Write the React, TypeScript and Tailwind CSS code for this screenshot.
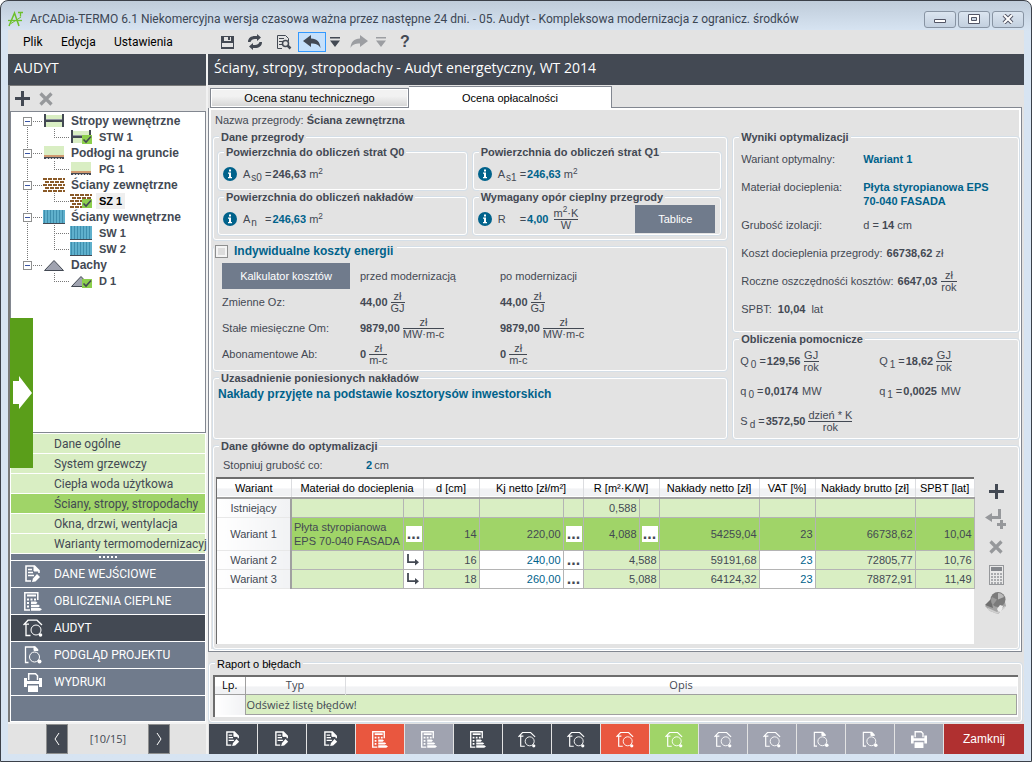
import { useState } from "react";
import type { ReactNode } from "react";
import clsx from "clsx";

/* ---------- icons ---------- */

interface IconProps {
  className?: string;
}

const LogoIcon = () => (
  <svg viewBox="0 0 16 16" className="h-4 w-4" fill="none" stroke="#6cc02b">
    <path d="M1 15 6.500 2 11 15" strokeWidth="1.500" />
    <path d="M0 9.500h14" strokeWidth="1.300" />
    <path d="M3 12.500 13 6" strokeWidth="1" />
    <path d="M10 1.500h5M12.500 1.500v4" strokeWidth="1.300" />
  </svg>
);

const SaveIcon = () => (
  <svg viewBox="0 0 13 13" className="h-[13px] w-[13px]" shapeRendering="crispEdges">
    <path d="M0 0h13v13H0z" fill="#434953" />
    <path d="M3 1h7v4H3zM1 7h11v4H1z" fill="#e3e3e3" />
    <path d="M7 1h2v3H7z" fill="#434953" />
  </svg>
);

const RefreshIcon = () => (
  <svg viewBox="0 0 16 16" className="h-4 w-4" fill="#434953">
    <path d="M1 8C1 4 4 2 8 2h2V0l4 3.500L10 7V5H8C6 5 4 6 3.500 8z" />
    <path d="M15 8c0 4-3 6-7 6H6v2l-4-3.500L6 9v2h2c2 0 4-1 4.500-3z" />
  </svg>
);

const FindPageIcon = () => (
  <svg viewBox="0 0 16 16" className="h-4 w-4" fill="none" stroke="#434953">
    <path d="M6 14.500H1.500v-13h8l3 3V7M3 4.500h5M3 7.500h4M3 10.500h3" />
    <circle cx="9.500" cy="9.500" r="3" strokeWidth="1.500" />
    <path d="m11.500 11.500 3 3" strokeWidth="2.500" />
  </svg>
);

const UndoIcon = () => (
  <svg viewBox="0 0 18 14" className="h-[14px] w-[18px]" fill="#434953">
    <path d="M0 6 8 0v3.500c6 0 9 3.500 9.500 9.500-2-3.500-4.500-4.500-9.500-4.500V12z" />
  </svg>
);

const RedoIcon = () => (
  <svg viewBox="0 0 18 14" className="h-[14px] w-[18px]" fill="#9c9ea2">
    <path d="M18 6 10 0v3.500C4 3.500 1 7 .5 13 2.500 9.500 5 8.500 10 8.500V12z" />
  </svg>
);

const DropIcon = ({ className }: IconProps) => (
  <svg viewBox="0 0 10 10" className={clsx("h-[10px] w-[10px]", className)} fill="currentColor">
    <path d="M0 0h10v1.500H0zM0 3.500h10L5 10z" />
  </svg>
);

const PlusIcon = ({ className }: IconProps) => (
  <svg viewBox="0 0 15 15" className={clsx("h-[15px] w-[15px]", className)} fill="#434953">
    <path d="M6 0h3v6h6v3H9v6H6V9H0V6h6z" />
  </svg>
);

const CrossIcon = () => (
  <svg viewBox="0 0 14 14" className="h-[14px] w-[14px]" stroke="#96989b" strokeWidth="3.200">
    <path d="m1.500 1.500 11 11M12.500 1.500l-11 11" />
  </svg>
);

const InsertIcon = () => (
  <svg viewBox="0 0 22 20" className="h-5 w-[22px]" fill="#96989b">
    <path d="M13 0h3v10H7v3L0 8.500 7 4v3h6z" />
    <path d="M15 11h3v3h3v3h-3v3h-3v-3h-3v-3h3z" />
  </svg>
);

const CalculatorIcon = () => (
  <svg viewBox="0 0 15 20" className="h-5 w-[15px]" shapeRendering="crispEdges">
    <path d="M.5.5h14v19H.5z" fill="#e9e9e9" stroke="#96989b" />
    <path d="M2 2h11v4H2z" fill="#85888d" />
    {[8, 11, 14, 17].map((y) => (
      <path key={y} d={`M2 ${y}h2v2H2zM5 ${y}h2v2H5zM8 ${y}h2v2H8zM11 ${y}h2v2h-2z`} fill="#a9abae" />
    ))}
  </svg>
);

const BookIcon = () => (
  <svg viewBox="0 0 22 22" className="h-[22px] w-[22px]">
    <path d="m0 14 6-5 14 1 1 4-8 8-8-3z" fill="#a3a3a3" />
    <path d="m3 16 9 4 8-6v2l-8 6-9-4z" fill="#cfcfcf" />
    <path d="m0 13 6-6 2 9z" fill="#6f6f6f" />
    <circle cx="13" cy="7.500" r="7.500" fill="#7b7b7b" />
    <path d="M13 7.500V1a6.500 6.500 0 0 1 6 4z" fill="#b9b9b9" />
    <path d="M12 7.500 8 13a7 7 0 0 1-1-8z" fill="#9a9a9a" />
    <path d="m12 17 3-4 3 1-2 6-3-1z" fill="#ececec" />
  </svg>
);

const InfoIcon = () => (
  <svg viewBox="0 0 14 14" className="h-[14px] w-[14px] shrink-0">
    <circle cx="7" cy="7" r="7" fill="#00628b" />
    <path d="M6 2.500h2v2H6zM5 5.500h3v4.500h1v1.200H5V10h1V6.700H5z" fill="#fff" />
  </svg>
);

const DocEditIcon = ({ className }: IconProps) => (
  <svg viewBox="0 0 16 18" className={className} fill="none" stroke="#fff">
    <path d="M6 16H1V1h8.500L14 5.500V8" strokeWidth="1.600" />
    <path d="M9 1v5h5z" fill="#fff" />
    <path d="M3 4.500h4M3 7.500h5M3 10.500h6" strokeWidth="1.300" />
    <path d="m12 9 3 3-4.500 4.500L7 17l1-3.500z" fill="#fff" stroke="none" />
  </svg>
);

const CalcBarsIcon = ({ className }: IconProps) => (
  <svg viewBox="0 0 18 19" className={className} fill="none" stroke="#fff">
    <path d="M6 18H.8V.8h13V8" strokeWidth="1.500" />
    <path d="M3 3.500h9" strokeWidth="2" />
    <path d="M3 6.500h2v2H3zM6.500 6.500h2v2h-2zM10 6.500h2v2h-2zM3 10h2v2H3zM3 13.500h2v2H3z" fill="#fff" stroke="none" />
    <path d="M7 9.500h5l1.500 1.200L12 12H7zM7 12.800h7.500L16 14l-1.500 1.200H7zM7 16h9l2 1.300-2 1.500H7z" fill="#fff" stroke="none" />
  </svg>
);

const HouseIcon = ({ className }: IconProps) => (
  <svg viewBox="0 0 20 18" className={className} fill="none" stroke="#fff">
    <path d="M.5 6 5 1.200h9L19 6M3 5.500V16.500h4.500M1 5.200h5" strokeWidth="1.300" />
    <circle cx="13" cy="11" r="5" />
    <circle cx="17.500" cy="16" r="1.800" fill="#fff" stroke="none" />
  </svg>
);

const DocFindIcon = ({ className }: IconProps) => (
  <svg viewBox="0 0 18 18" className={className} fill="none" stroke="#fff">
    <path d="M4.500 16.500H1.500V1H11L14 4" strokeWidth="1.300" />
    <path d="M10 .5v4h4z" fill="#fff" />
    <circle cx="10.500" cy="11" r="5" />
    <circle cx="15.500" cy="15.500" r="2" fill="#fff" stroke="none" />
  </svg>
);

const PrinterIcon = ({ className }: IconProps) => (
  <svg viewBox="0 0 18 19" className={className}>
    <path d="M4.700 7V.8h6.800l2 2V7" fill="none" stroke="#fff" strokeWidth="1.500" />
    <path d="M0 5h3v3h12V5h3v9h-3v-3H3v3H0zM4 12.500h10V19H4z" fill="#fff" />
  </svg>
);

const EnterIcon = () => (
  <svg viewBox="0 0 14 12" className="h-3 w-[14px]" fill="none" stroke="#434953" strokeWidth="1.800">
    <path d="M2 0v8.200h9" />
    <path d="m9 5 4 3.200-4 3.300z" fill="#434953" stroke="none" />
  </svg>
);

/* ---------- tree ---------- */

type Kind = "ceiling" | "floor" | "brick" | "wall" | "roof";

const KindIcon = ({ kind, checked }: { kind: Kind; checked?: boolean }) => (
  <svg viewBox="0 0 22 16" className="h-4 w-[22px] shrink-0" shapeRendering={kind === "roof" ? "auto" : "crispEdges"}>
    {kind === "ceiling" && (
      <>
        <path d="M2 2h18v12H2z" fill="#d9eec3" />
        <path d="M1 1h2v13H1zM19 1h2v13h-2zM3 7h16v2H3z" fill="#434953" />
        <path d="M3 6h16v1H3z" fill="#9296a3" />
      </>
    )}
    {kind === "floor" && (
      <>
        <path d="M1 1h20v9H1z" fill="#d9eec3" />
        <path d="M1 10h20v2H1z" fill="#d09a70" />
        <path d="M1 12h20v2H1z" fill="#434953" />
        <path d="M3 13.500h16" stroke="#ccc" strokeDasharray="2 1" />
      </>
    )}
    {kind === "brick" && (
      <g stroke="#8a5a28" strokeWidth="2">
        <path d="M0 2h22M0 8h22M0 14h22" strokeDasharray="4 1" />
        <path d="M2 5h20M2 11h20" strokeDasharray="4 1" />
      </g>
    )}
    {kind === "wall" && (
      <>
        <path d="M0 1h22v13H0z" fill="#5fb0cc" />
        <path d="M1 7.500h20" stroke="#3f8fae" strokeWidth="13" strokeDasharray="1 2" />
        <path d="M0 14h22v1H0z" fill="#434953" />
      </>
    )}
    {kind === "roof" && <path d="M1.500 13.500 11 3.500l9.500 10z" fill="#a0a3b0" stroke="#434953" />}
    {checked && (
      <g shapeRendering="auto">
        <path d="M12 6h10v9H12z" fill="#8ccf4d" />
        <path d="m13.500 10.500 2.500 2.500 5-5.500" fill="none" stroke="#434953" strokeWidth="1.600" />
      </g>
    )}
  </svg>
);

interface TreeGroup {
  title: string;
  kind: Kind;
  items: { title: string; checked?: boolean }[];
}

const TREE: TreeGroup[] = [
  { title: "Stropy wewnętrzne", kind: "ceiling", items: [{ title: "STW 1", checked: true }] },
  { title: "Podłogi na gruncie", kind: "floor", items: [{ title: "PG 1" }] },
  { title: "Ściany zewnętrzne", kind: "brick", items: [{ title: "SZ 1", checked: true }] },
  { title: "Ściany wewnętrzne", kind: "wall", items: [{ title: "SW 1" }, { title: "SW 2" }] },
  { title: "Dachy", kind: "roof", items: [{ title: "D 1", checked: true }] },
];

const Tree = () => {
  const [selected, setSelected] = useState("SZ 1");
  const [closed, setClosed] = useState<string[]>([]);

  const toggle = (title: string) =>
    setClosed(closed.includes(title) ? closed.filter((t) => t !== title) : [...closed, title]);

  return (
    <ul className="pt-px pl-3 leading-4 font-bold">
      {TREE.map((group, g) => {
        const last = g === TREE.length - 1;
        const isClosed = closed.includes(group.title);
        return (
          <li key={group.title}>
            <div className="flex h-4 items-center text-[12px] leading-4">
              <button aria-label={`Zwiń ${group.title}`} onClick={() => toggle(group.title)}>
                <svg viewBox="0 0 20 16" className="h-4 w-5" fill="none" stroke="#777" shapeRendering="crispEdges">
                  <path d={`M4.500 ${g === 0 ? 8 : 0}V${last ? 8 : 16}M10 8.500h9`} strokeDasharray="1 1" />
                  <path d="M.5 4.500h8v8h-8z" fill="#fff" stroke="#8e8f8f" />
                  <path d={isClosed ? "M2 8.500h5M4.500 6v5" : "M2 8.500h5"} stroke="#3a55a4" />
                </svg>
              </button>
              <KindIcon kind={group.kind} />
              <span className="ml-[3px] px-[3px]">{group.title}</span>
            </div>
            {!isClosed && (
              <ul>
                {group.items.map((item, i) => (
                  <li key={item.title} className="flex h-4 items-center">
                    <svg viewBox="0 0 47 16" className="h-4 w-[47px]" fill="none" stroke="#777" strokeDasharray="1 1" shapeRendering="crispEdges">
                      {!last && <path d="M4.500 0v16" />}
                      <path d={`M31.500 0v${i === group.items.length - 1 ? 8 : 16}M31 8.500h15`} />
                    </svg>
                    <KindIcon kind={group.kind} checked={item.checked} />
                    <button
                      onClick={() => setSelected(item.title)}
                      className={clsx("ml-1 px-[3px]", selected === item.title && "bg-[#efefef] text-black")}
                    >
                      {item.title}
                    </button>
                  </li>
                ))}
              </ul>
            )}
          </li>
        );
      })}
    </ul>
  );
};

/* ---------- form parts ---------- */

const GROUP_BOX = "min-w-0 rounded-[3px] border border-white shadow-[0_0_0_1px_#d5dfe8]";

interface GroupProps {
  title: string;
  className?: string;
  children: ReactNode;
}

const Group = ({ title, className, children }: GroupProps) => (
  <fieldset className={GROUP_BOX}>
    <legend className="ml-[5px] bg-[#e3e3e3] px-[2px] leading-[14px] font-bold">{title}</legend>
    <div className={className}>{children}</div>
  </fieldset>
);

const Fraction = ({ top, bottom }: { top: ReactNode; bottom: ReactNode }) => (
  <span className="inline-flex flex-col text-center leading-[11px]">
    <span className="border-b border-[#434953]">{top}</span>
    <span>{bottom}</span>
  </span>
);

const ValueInput = ({ label, value }: { label: string; value: string }) => (
  <input aria-label={label} defaultValue={value} className="ml-px field-sizing-content bg-transparent font-bold text-[#00628b]" />
);

const Sub = ({ base, sub }: { base: string; sub?: string }) => (
  <span className="w-[22px]">
    {base}
    {sub && <sub className="pl-px text-[10px]">{sub}</sub>}
  </span>
);

const Symbol = ({ base, sub, children }: { base: string; sub: string; children: ReactNode }) => (
  <div className="flex items-center gap-[3px]">
    <span>
      {base}
      <sub className="pl-[2px] text-[10px]">{sub}</sub>
    </span>
    {children}
  </div>
);

const COST_ROWS = [
  { label: "Zmienne Oz:", value: "44,00", unit: "GJ" },
  { label: "Stałe miesięczne Om:", value: "9879,00", unit: "MW·m-c" },
  { label: "Abonamentowe Ab:", value: "0", unit: "m-c" },
];

const PartitionData = () => (
  <Group title="Dane przegrody" className="grid grid-cols-2 gap-x-[6px] pt-px pr-[5px] pb-1 pl-1">
    <Group title="Powierzchnia do obliczeń strat Q0" className="flex h-[30px] items-center pr-[5px] pl-1">
      <InfoIcon />
      <span className="w-[6px]" />
      <Sub base="A" sub="s0" />
      <span>
        =<b className="ml-px">246,63</b> m<sup>2</sup>
      </span>
    </Group>
    <Group title="Powierzchnia do obliczeń strat Q1" className="flex h-[30px] items-center pr-[5px] pl-1">
      <InfoIcon />
      <span className="w-[6px]" />
      <Sub base="A" sub="s1" />
      <span>
        =<ValueInput label="Powierzchnia Q1" value="246,63" /> m<sup>2</sup>
      </span>
    </Group>
    <Group title="Powierzchnia do obliczeń nakładów" className="flex h-[30px] items-center pr-[5px] pl-1">
      <InfoIcon />
      <span className="w-[6px]" />
      <Sub base="A" sub="n" />
      <span>
        =<ValueInput label="Powierzchnia nakładów" value="246,63" /> m<sup>2</sup>
      </span>
    </Group>
    <Group title="Wymagany opór cieplny przegrody" className="flex h-[30px] items-center pr-[5px] pl-1">
      <InfoIcon />
      <span className="w-[6px]" />
      <Sub base="R" />
      <span className="mr-[5px]">
        =<ValueInput label="Wymagany opór cieplny" value="4,00" />
      </span>
      <Fraction top={<>m<sup>2</sup>·K</>} bottom="W" />
      <button className="ml-auto h-7 w-20 bg-[#707b8c] text-white">Tablice</button>
    </Group>
  </Group>
);

const EnergyCosts = () => (
  <fieldset className={clsx(GROUP_BOX, "-mt-1")}>
    <legend className="pt-2">
      <label className="flex items-center gap-[6px] bg-[#e3e3e3] pr-1 pl-px text-[12px] leading-[14px] font-bold text-[#00628b]">
        <input
          type="checkbox"
          className="h-[13px] w-[13px] appearance-none border border-[#8e8f8f] bg-[#dcdcdc] inset-ring-2 inset-ring-[#f4f4f4] checked:bg-[#00628b]"
        />
        Indywidualne koszty energii
      </label>
    </legend>
    <div className="grid auto-rows-[26px] grid-cols-[138px_140px_1fr] items-center pt-[5px] pb-[3px] pl-2">
      <button className="h-[26px] w-[128px] bg-[#707b8c] text-white">Kalkulator kosztów</button>
      <span>przed modernizacją</span>
      <span>po modernizacji</span>
      {COST_ROWS.map((row) => (
        <div key={row.label} className="contents">
          <span>{row.label}</span>
          {[0, 1].map((i) => (
            <span key={i} className="flex items-center gap-[3px]">
              <b>{row.value}</b>
              <Fraction top="zł" bottom={row.unit} />
            </span>
          ))}
        </div>
      ))}
    </div>
  </fieldset>
);

const Results = () => (
  <Group title="Wyniki optymalizacji" className="pt-px pr-1 pb-2 pl-[7px]">
    <dl className="grid grid-cols-[122px_1fr] leading-[14px]">
      <dt className="py-[7px]">Wariant optymalny:</dt>
      <dd className="py-[7px] font-bold text-[#00628b]">Wariant 1</dd>
      <dt className="pt-[7px] pb-[3px]">Materiał docieplenia:</dt>
      <dd className="pt-[7px] pb-[3px] font-bold text-[#00628b]">
        Płyta styropianowa EPS
        <br />
        70-040 FASADA
      </dd>
      <dt className="py-[7px]">Grubość izolacji:</dt>
      <dd className="py-[7px]">
        d = <b>14</b> cm
      </dd>
    </dl>
    <p className="flex h-7 items-center gap-1">
      Koszt docieplenia przegrody:
      <span>
        <b>66738,62</b> zł
      </span>
    </p>
    <p className="flex h-7 items-center gap-1">
      Roczne oszczędnośći kosztów: <b>6647,03</b>
      <Fraction top="zł" bottom="rok" />
    </p>
    <p className="flex h-7 items-center gap-[6px]">
      SPBT: <b>10,04</b> lat
    </p>
  </Group>
);

const Calculations = () => (
  <Group title="Obliczenia pomocnicze" className="grid auto-rows-[30px] grid-cols-2 items-center pb-[2px] pl-[6px]">
    <Symbol base="Q" sub="0">
      <span>
        =<b className="ml-px">129,56</b>
      </span>
      <Fraction top="GJ" bottom="rok" />
    </Symbol>
    <Symbol base="Q" sub="1">
      <span>
        =<b className="ml-px">18,62</b>
      </span>
      <Fraction top="GJ" bottom="rok" />
    </Symbol>
    <Symbol base="q" sub="0">
      <span>
        =<b className="mr-px ml-px">0,0174</b> MW
      </span>
    </Symbol>
    <Symbol base="q" sub="1">
      <span>
        =<b className="mr-px ml-px">0,0025</b> MW
      </span>
    </Symbol>
    <Symbol base="S" sub="d">
      <span>
        =<b className="ml-px">3572,50</b>
      </span>
      <Fraction top="dzień * K" bottom="rok" />
    </Symbol>
  </Group>
);

/* ---------- variants table ---------- */

const CELL = "border border-[#b4b4b4] px-[2px]";
const LIGHT = "bg-[#d9eec3]";
const EDIT = "bg-white text-[#00628b]";

const MoreButton = () => (
  <button aria-label="Wybierz" className="block h-4 w-4 bg-white text-[16px] leading-4 font-bold">
    ...
  </button>
);

const VARIANTS = [
  { name: "Wariant 2", d: "16", kj: "240,00", r: "4,588", net: "59191,68", gross: "72805,77", spbt: "10,76" },
  { name: "Wariant 3", d: "18", kj: "260,00", r: "5,088", net: "64124,32", gross: "78872,91", spbt: "11,49" },
];

const VariantsTable = () => (
  <table className="w-full table-fixed border-collapse text-right">
    <colgroup>
      <col className="w-[74px]" />
      <col className="w-[112px]" />
      <col className="w-5" />
      <col className="w-[56px]" />
      <col className="w-[84px]" />
      <col className="w-5" />
      <col className="w-[56px]" />
      <col className="w-5" />
      <col className="w-[100px]" />
      <col className="w-[56px]" />
      <col className="w-[100px]" />
      <col className="w-[59px]" />
    </colgroup>
    <thead>
      <tr className="h-[19px] border-b-2 border-[#a0a0a0] bg-linear-to-b from-white from-50% to-[#f1f2f4] to-60% text-center text-black [&>th]:border-r [&>th]:border-[#dcdde0] [&>th]:font-normal [&>th]:whitespace-nowrap">
        <th>Wariant</th>
        <th colSpan={2}>Materiał do docieplenia</th>
        <th>d [cm]</th>
        <th colSpan={2}>Kj netto [zł/m²]</th>
        <th colSpan={2}>R [m²·K/W]</th>
        <th>Nakłady netto [zł]</th>
        <th>VAT [%]</th>
        <th>Nakłady brutto [zł]</th>
        <th>SPBT [lat]</th>
      </tr>
    </thead>
    <tbody className="[&>tr>th]:border-r-2 [&>tr>th]:border-b [&>tr>th]:border-r-[#a0a0a0] [&>tr>th]:border-b-[#e8e8e8] [&>tr>th]:bg-linear-to-r [&>tr>th]:from-white [&>tr>th]:to-[#f1f2f4] [&>tr>th]:text-center [&>tr>th]:font-normal">
      <tr className="h-[19px]">
        <th>Istniejący</th>
        <td className={clsx(CELL, LIGHT)} />
        <td className={clsx(CELL, LIGHT)} />
        <td className={clsx(CELL, LIGHT)} />
        <td className={clsx(CELL, LIGHT)} />
        <td className={clsx(CELL, LIGHT)} />
        <td className={clsx(CELL, LIGHT)}>0,588</td>
        <td className={clsx(CELL, LIGHT)} />
        <td className={clsx(CELL, LIGHT)} />
        <td className={clsx(CELL, LIGHT)} />
        <td className={clsx(CELL, LIGHT)} />
        <td className={clsx(CELL, LIGHT)} />
      </tr>
      <tr className="h-[33px] bg-[#a0d468]">
        <th>Wariant 1</th>
        <td className={clsx(CELL, "text-left leading-[14px] whitespace-nowrap")}>
          Płyta styropianowa
          <br />
          EPS 70-040 FASADA
        </td>
        <td className={CELL}>
          <MoreButton />
        </td>
        <td className={CELL}>14</td>
        <td className={CELL}>220,00</td>
        <td className={CELL}>
          <MoreButton />
        </td>
        <td className={CELL}>4,088</td>
        <td className={CELL}>
          <MoreButton />
        </td>
        <td className={CELL}>54259,04</td>
        <td className={CELL}>23</td>
        <td className={CELL}>66738,62</td>
        <td className={CELL}>10,04</td>
      </tr>
      {VARIANTS.map((v) => (
        <tr key={v.name} className="h-[19px]">
          <th>{v.name}</th>
          <td className={clsx(CELL, LIGHT)} />
          <td className={clsx(CELL, "bg-white")}>
            <button aria-label="Wstaw materiał" className="block">
              <EnterIcon />
            </button>
          </td>
          <td className={clsx(CELL, LIGHT)}>{v.d}</td>
          <td className={clsx(CELL, EDIT)}>
            <input aria-label={`Kj netto ${v.name}`} defaultValue={v.kj} className="block w-full text-right" />
          </td>
          <td className={clsx(CELL, "bg-white")}>
            <MoreButton />
          </td>
          <td colSpan={2} className={clsx(CELL, LIGHT)}>{v.r}</td>
          <td className={clsx(CELL, LIGHT)}>{v.net}</td>
          <td className={clsx(CELL, EDIT)}>
            <input aria-label={`VAT ${v.name}`} defaultValue="23" className="block w-full text-right" />
          </td>
          <td className={clsx(CELL, LIGHT)}>{v.gross}</td>
          <td className={clsx(CELL, LIGHT)}>{v.spbt}</td>
        </tr>
      ))}
    </tbody>
  </table>
);

const ErrorReport = () => (
  <fieldset className={clsx(GROUP_BOX, "mt-[5px] mr-[2px] ml-px px-[3px] py-1")}>
    <legend className="ml-[2px] bg-[#e3e3e3] px-[2px] leading-[14px] text-black">Raport o błędach</legend>
    <div className="border-t-2 border-l-2 border-[#6d6d6d] bg-white pr-px pb-[2px]">
      <table className="w-full border-collapse font-['Open_Sans',sans-serif]">
        <thead>
          <tr className="h-[18px] border-b border-[#a0a0a0] bg-linear-to-b from-white from-50% to-[#f1f2f4] to-60% [&>th]:font-normal">
            <th className="w-[30px] border-r border-[#a0a0a0] text-black">Lp.</th>
            <th className="w-[100px] border-r border-[#dcdde0]">Typ</th>
            <th>Opis</th>
          </tr>
        </thead>
        <tbody>
          <tr className="h-5">
            <td className="bg-linear-to-r from-white to-[#f1f2f4]" />
            <td colSpan={2} className="border border-[#a0a0a0] bg-[#d9eec3] px-px">
              Odśwież listę błędów!
            </td>
          </tr>
        </tbody>
      </table>
    </div>
  </fieldset>
);

/* ---------- navigation ---------- */

const SECTIONS = [
  "Dane ogólne",
  "System grzewczy",
  "Ciepła woda użytkowa",
  "Ściany, stropy, stropodachy",
  "Okna, drzwi, wentylacja",
  "Warianty termomodernizacyj",
];

const STAGES = [
  { title: "DANE WEJŚCIOWE", icon: <DocEditIcon className="h-[18px] w-4" /> },
  { title: "OBLICZENIA CIEPLNE", icon: <CalcBarsIcon className="h-[19px] w-[18px]" /> },
  { title: "AUDYT", icon: <HouseIcon className="h-[18px] w-5" /> },
  { title: "PODGLĄD PROJEKTU", icon: <DocFindIcon className="h-[18px] w-[18px]" /> },
  { title: "WYDRUKI", icon: <PrinterIcon className="h-[19px] w-[18px]" /> },
];

const docEdit = <DocEditIcon className="h-4 w-[14px]" />;
const calcBars = <CalcBarsIcon className="h-[17px] w-4" />;
const house = <HouseIcon className="h-[17px] w-[18px]" />;
const docFind = <DocFindIcon className="h-[17px] w-4" />;

const STEPS = [
  { icon: docEdit, color: "bg-[#434953]" },
  { icon: docEdit, color: "bg-[#434953]" },
  { icon: docEdit, color: "bg-[#434953]" },
  { icon: calcBars, color: "bg-[#e9573f]" },
  { icon: calcBars, color: "bg-[#a0a3b0]" },
  { icon: calcBars, color: "bg-[#434953]" },
  { icon: house, color: "bg-[#434953]" },
  { icon: house, color: "bg-[#434953]" },
  { icon: house, color: "bg-[#e9573f]" },
  { icon: house, color: "bg-[#a0d468]" },
  { icon: house, color: "bg-[#a0a3b0]" },
  { icon: house, color: "bg-[#a0a3b0]" },
  { icon: docFind, color: "bg-[#a0a3b0]" },
  { icon: docFind, color: "bg-[#a0a3b0]" },
  { icon: <PrinterIcon className="h-[17px] w-4" />, color: "bg-[#a0a3b0]" },
];

const TitleBar = () => (
  <header className="flex h-[29px] items-center pt-[7px] font-[Roboto,sans-serif] text-[12px] text-[#3c4654]">
    <LogoIcon />
    <h1 className="ml-[6px] flex-1">
      ArCADia-TERMO 6.1 Niekomercyjna wersja czasowa ważna przez następne 24 dni. - 05. Audyt - Kompleksowa modernizacja z ogranicz. środków
    </h1>
    <div className="flex gap-[2px] [&>button]:flex [&>button]:h-[17px] [&>button]:w-8 [&>button]:items-center [&>button]:justify-center [&>button]:rounded-[3px] [&>button]:border [&>button]:border-[#8894a3] [&>button]:bg-linear-to-b [&>button]:from-[#dbe5f0] [&>button]:to-[#c3d0df]">
      <button aria-label="Minimalizuj">
        <svg viewBox="0 0 12 10" className="h-[10px] w-3">
          <path d="M.5 5.500h11v3H.5z" fill="#fff" stroke="#535666" />
        </svg>
      </button>
      <button aria-label="Maksymalizuj">
        <svg viewBox="0 0 12 10" className="h-[10px] w-3">
          <path d="M.5.5h11v9H.5z" fill="#fff" stroke="#535666" />
          <path d="M3.500 3.500h5v3h-5z" fill="#c9d5e3" stroke="#535666" />
        </svg>
      </button>
      <button aria-label="Zamknij okno">
        <svg viewBox="0 0 12 10" className="h-[10px] w-3">
          <path d="m2 1 8 8M10 1 2 9" stroke="#535666" strokeWidth="4" />
          <path d="m2 1 8 8M10 1 2 9" stroke="#fff" strokeWidth="2" />
        </svg>
      </button>
    </div>
  </header>
);

const MenuBar = () => (
  <nav className="flex h-6 items-center bg-[#e3e3e3] pl-[15px] font-[Roboto,sans-serif] text-[12px] text-black">
    <button className="w-[38px] text-left">Plik</button>
    <button className="w-[53px] text-left">Edycja</button>
    <button className="w-[99px] text-left">Ustawienia</button>
    <button aria-label="Zapisz" className="flex w-7 justify-center"><SaveIcon /></button>
    <button aria-label="Odśwież" className="flex w-7 justify-center"><RefreshIcon /></button>
    <button aria-label="Podgląd" className="flex w-[29px] justify-center"><FindPageIcon /></button>
    <button aria-label="Cofnij" className="flex h-5 w-7 items-center justify-center border border-[#3399ff] bg-[#c5e0fb]">
      <UndoIcon />
    </button>
    <button aria-label="Lista cofnięć" className="ml-1"><DropIcon className="text-[#434953]" /></button>
    <button aria-label="Ponów" className="ml-[10px]"><RedoIcon /></button>
    <button aria-label="Lista ponowień" className="ml-2"><DropIcon className="text-[#9c9ea2]" /></button>
    <button aria-label="Pomoc" className="ml-[14px] font-['Liberation_Sans',Arial,sans-serif] text-[16px] font-bold text-[#434953]">?</button>
  </nav>
);

const Sidebar = () => {
  const [section, setSection] = useState(SECTIONS[3]);
  const [stage, setStage] = useState("AUDYT");

  return (
    <aside className="flex w-[198px] shrink-0 flex-col bg-[#e3e3e3]">
      <h2 className="h-[31px] bg-[#434953] pl-[6px] font-['Open_Sans',sans-serif] text-[14px] leading-7 text-white">AUDYT</h2>
      <div className="flex flex-1 flex-col border-t border-l-2 border-[#7a7a7a]">
        <div className="flex h-[25px] items-center gap-[9px] pl-[5px]">
          <button aria-label="Dodaj"><PlusIcon /></button>
          <button aria-label="Usuń"><CrossIcon /></button>
        </div>
        <div className="relative flex-1 border border-[#828790] bg-white">
          <Tree />
          {/* Slide-out handle over the tree and the section list */}
          <button
            aria-label="Rozwiń panel"
            className="absolute -bottom-9 -left-px flex h-[150px] w-[23px] items-center justify-center bg-[#5a9e1a]"
          >
            <svg viewBox="0 0 20 34" className="h-[34px] w-5" fill="#fff">
              <path d="M1 5h6V0l13 17L7 33v-5H1z" />
            </svg>
          </button>
        </div>
        <ul className="border-t border-r border-l border-white bg-white font-[Roboto,sans-serif] text-[12px]">
          {SECTIONS.map((s) => (
            <li key={s}>
              <button
                onClick={() => setSection(s)}
                className={clsx(
                  "block h-5 w-full border-b border-white pl-[43px] text-left leading-5 whitespace-nowrap",
                  s === section ? "bg-[#a0d468]" : "bg-[#d9eec3]"
                )}
              >
                {s}
              </button>
            </li>
          ))}
        </ul>
        <div className="border-r border-l border-white bg-white">
          <div className="flex h-[6px] items-center justify-center gap-[2px] bg-[#707b8c]">
            {[0, 1, 2, 3, 4].map((i) => (
              <span key={i} className="h-[2px] w-[2px] bg-white" />
            ))}
          </div>
          <ul className="pt-px font-[Roboto,sans-serif] text-[12px] text-white">
            {STAGES.map((s) => (
              <li key={s.title}>
                <button
                  onClick={() => setStage(s.title)}
                  className={clsx(
                    "flex h-[27px] w-full items-center border-b border-white text-left",
                    s.title === stage ? "bg-[#434953]" : "bg-[#707b8c]"
                  )}
                >
                  <span className="flex w-[43px] justify-center">{s.icon}</span>
                  {s.title}
                </button>
              </li>
            ))}
          </ul>
          <div className="h-[26px] border-b border-white bg-[#707b8c]" />
        </div>
      </div>
      <div className="flex h-8 items-end border-t-2 border-[#f4f4f4] pl-[38px] font-['Open_Sans',sans-serif]">
        <button aria-label="Poprzedni" className="flex h-[30px] w-[22px] items-center justify-center border border-[#8e8f8f] bg-[#434953]">
          <svg viewBox="0 0 6 12" className="h-3 w-[6px]" fill="none" stroke="#fff"><path d="M5 0 1 6l4 6" /></svg>
        </button>
        <span className="w-20 text-center leading-[30px]">[10/15]</span>
        <button aria-label="Następny" className="flex h-[30px] w-[22px] items-center justify-center border border-[#8e8f8f] bg-[#434953]">
          <svg viewBox="0 0 6 12" className="h-3 w-[6px]" fill="none" stroke="#fff"><path d="m1 0 4 6-4 6" /></svg>
        </button>
      </div>
    </aside>
  );
};

const Tabs = () => (
  <div role="tablist" className="flex h-[22px] items-end text-black">
    <button role="tab" aria-selected={false} className="ml-[2px] h-5 w-[199px] border border-[#828790] bg-linear-to-b from-[#f2f2f2] from-40% to-[#d4d4d4] inset-ring inset-ring-white">
      Ocena stanu technicznego
    </button>
    <button role="tab" aria-selected className="h-[22px] w-[203px] border-t border-r border-[#828790] bg-white">
      Ocena opłacalności
    </button>
    <span className="mr-[2px] h-full flex-1 border-b border-[#828790]" />
  </div>
);

export default function App() {
  return (
    <div className="flex min-h-screen flex-col rounded-t-lg border border-[#3b4049] bg-linear-to-b from-[#bfccda] to-[#d7e4f2] to-[30px] px-[7px] pb-[7px] font-['Liberation_Sans',Arial,sans-serif] text-[11px] leading-[14px] text-[#434953]">
      <TitleBar />
      <MenuBar />
      <div className="flex flex-1 gap-[2px] bg-[#f2f2f2]">
        <Sidebar />
        <main className="flex min-w-0 flex-1 flex-col bg-[#e3e3e3]">
          <h2 className="h-[31px] bg-[#434953] pl-[6px] font-['Open_Sans',sans-serif] text-[14px] leading-7 text-white">
            Ściany, stropy, stropodachy - Audyt energetyczny, WT 2014
          </h2>
          <div className="flex flex-1 flex-col pt-px">
            <Tabs />
            <section className="mr-[2px] flex flex-1 flex-col border-r border-b border-l border-[#828790] bg-white p-[2px]">
              <div className="flex flex-1 flex-col bg-[#e3e3e3] pl-[2px]">
                <p className="h-5 pl-[2px] leading-5">
                  Nazwa przegrody: <b>Ściana zewnętrzna</b>
                </p>
                <div className="grid grid-cols-[9fr_5fr] gap-x-[6px]">
                  <div>
                    <PartitionData />
                    <EnergyCosts />
                    <Group title="Uzasadnienie poniesionych nakładów" className="px-1">
                      <textarea
                        aria-label="Uzasadnienie poniesionych nakładów"
                        defaultValue="Nakłady przyjęte na podstawie kosztorysów inwestorskich"
                        className="block h-[53px] w-full resize-none bg-transparent pt-[2px] text-[12px] leading-[14px] font-bold text-[#00628b]"
                      />
                    </Group>
                  </div>
                  <div>
                    <Results />
                    <Calculations />
                  </div>
                </div>
                <fieldset className={clsx(GROUP_BOX, "flex flex-1 flex-col pl-[2px]")}>
                  <legend className="ml-[3px] bg-[#e3e3e3] px-[2px] leading-[14px] font-bold">Dane główne do optymalizacji</legend>
                  <div className="flex h-6 items-center pl-[7px]">
                    <label htmlFor="step" className="w-[143px]">Stopniuj grubość co:</label>
                    <input id="step" defaultValue="2" className="field-sizing-content bg-transparent font-bold text-[#00628b]" />
                    <span className="ml-[2px]">cm</span>
                  </div>
                  <div className="flex flex-1">
                    <div className="mb-1 min-w-0 flex-1 border-t-2 border-l border-[#6d6d6d] bg-white">
                      <VariantsTable />
                    </div>
                    <div className="flex w-[44px] flex-col items-center [&>button]:flex [&>button]:h-7 [&>button]:items-center">
                      <button aria-label="Dodaj wariant"><PlusIcon /></button>
                      <button aria-label="Wstaw wariant"><InsertIcon /></button>
                      <button aria-label="Usuń wariant"><CrossIcon /></button>
                      <button aria-label="Kalkulator"><CalculatorIcon /></button>
                      <button aria-label="Wykres"><BookIcon /></button>
                    </div>
                  </div>
                </fieldset>
              </div>
            </section>
            <ErrorReport />
          </div>
          <div className="mt-[2px] flex h-[30px] gap-px pl-px">
            {STEPS.map((step, i) => (
              <button key={i} aria-label={`Krok ${i + 1}`} className={clsx("flex flex-1 items-center justify-center", step.color)}>
                {step.icon}
              </button>
            ))}
            <button className="w-20 bg-[#b03030] text-[12px] text-white">Zamknij</button>
          </div>
        </main>
      </div>
    </div>
  );
}
